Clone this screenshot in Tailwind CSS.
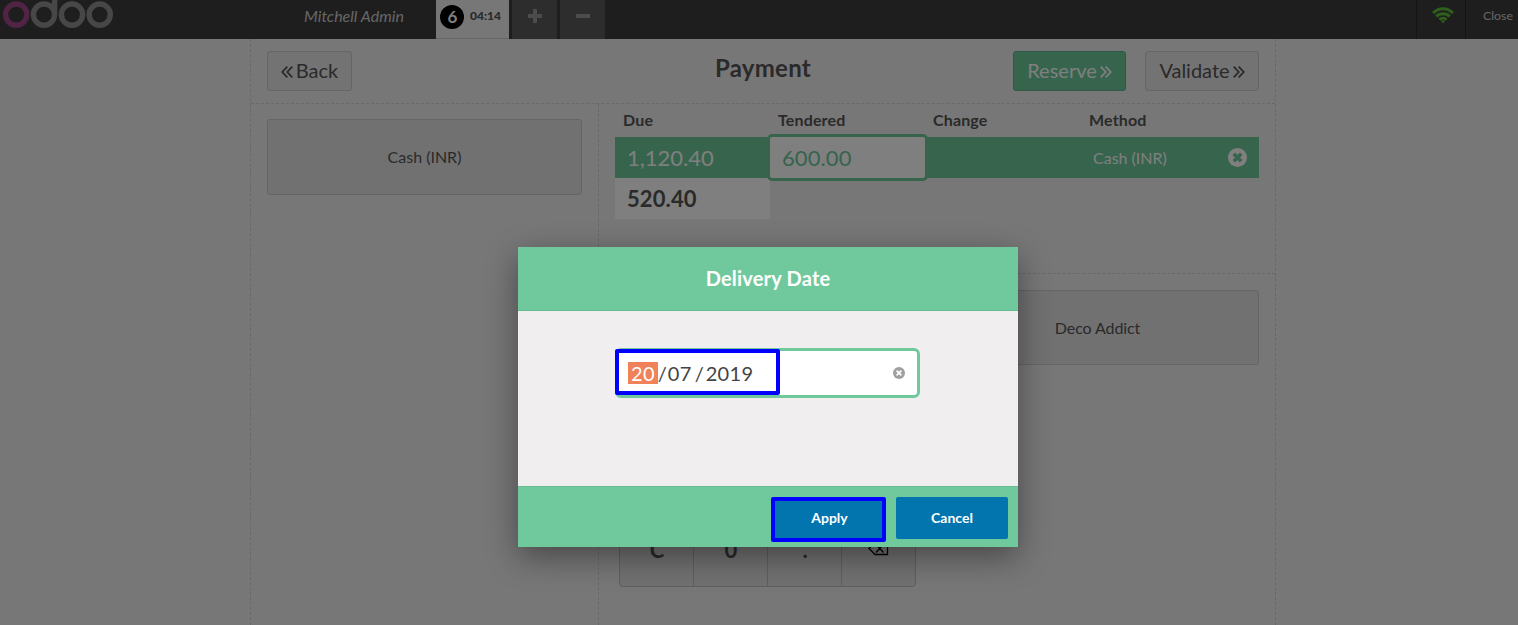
<!DOCTYPE html>
<html lang="en">
<head>
<meta charset="utf-8">
<title>Payment</title>
<script src="https://cdn.jsdelivr.net/npm/@tailwindcss/browser@4"></script>
</head>
<body class="relative h-[625px] w-[1518px] overflow-hidden bg-[#f0eeee] font-['Lato',sans-serif] text-[#555555]">

<!-- Top bar -->
<header class="flex h-[39px] bg-[#3c3c3c] text-[#cccccc]">
  <div class="w-[304px]">
    <svg class="block" width="116" height="30" viewBox="0 0 116 30" fill="none" stroke-width="5.4">
      <circle cx="16.2" cy="14.6" r="10.6" stroke="#a24689"/>
      <g stroke="#8f8f8f"><circle cx="44" cy="14.6" r="10.6"/><path d="M54.6 0V15"/><circle cx="72" cy="14.6" r="10.6"/><circle cx="99.7" cy="14.6" r="10.6"/></g>
    </svg>
  </div>
  <div class="w-[132px] pt-[3px] text-[16px] leading-[25px] italic">Mitchell Admin</div>
  <div class="mr-[3px] flex w-[73px] items-start border-b border-[#cccccc] bg-[#f0eeee] pt-[5px] pl-[4px] text-[#555555]">
    <span class="flex size-[24px] items-center justify-center rounded-full bg-black pl-[1px] text-[17px] font-bold text-white">6</span>
    <span class="ml-[6px] pt-px text-[12px] leading-[20px] font-black">04:14</span>
  </div>
  <div class="mr-[3px] flex w-[45px] justify-center bg-[#5b5b5b] pt-[9px] pl-px">
    <svg width="14" height="14" viewBox="0 0 14 14" stroke="#999" stroke-width="4"><path d="M0 7H14M7 0V14"/></svg>
  </div>
  <div class="flex w-[45px] justify-center bg-[#5b5b5b] pt-[9px] pl-px">
    <svg width="14" height="14" viewBox="0 0 14 14" stroke="#999" stroke-width="4"><path d="M0 7H14"/></svg>
  </div>
  <div class="ml-auto flex w-[50px] justify-center border-x border-[#292929] pt-[7px] pl-[4px]">
    <svg width="22" height="16" viewBox="0 0 22 16" fill="none" stroke="#5ec137" stroke-width="3"><path d="M1 6C6.5 .2 15.5 .2 21 6"/><path d="M4.3 9.4C8 5.8 14 5.8 17.7 9.4"/><path d="M7.5 12.7C9.5 10.8 12.5 10.8 14.5 12.7"/><path d="M11 16L8.9 13.9Q11 12.6 13.1 13.9Z" fill="#5ec137" stroke="none"/></svg>
  </div>
  <div class="w-[52px] pt-[6px] pl-[17px] text-[12.3px] leading-[20px]">Close</div>
</header>

<!-- Payment screen -->
<main class="ml-[250px] flex h-[586px] w-[1026px] flex-col border-x border-dashed border-[#d4d2d2]">
  <div class="flex h-[65px] shrink-0 items-start border-b border-dashed border-[#d4d2d2] px-[16px] pt-[12px]">
    <div class="flex h-[40px] w-[85px] items-center justify-center gap-[3px] rounded-[3px] border border-[#cacaca] bg-[#e6e6e6] text-[20px]">
      <svg class="mt-[2px]" width="12" height="12" viewBox="0 0 12 12" fill="none" stroke="currentColor" stroke-width="1.8"><path d="M6.3 .7L1.3 6L6.3 11.3M11.3 .7L6.3 6L11.3 11.3"/></svg>
      <span class="pb-[2px]">Back</span>
    </div>
    <h1 class="ml-[363px] w-[298px] text-[24px] leading-[34px] font-bold tracking-[0.25px]">Payment</h1>
    <div class="flex h-[40px] w-[113px] items-center justify-center gap-[3px] rounded-[3px] border border-[#64af8a] bg-[#6ec89b] text-[20px] text-white">
      <span class="pb-[2px]">Reserve</span>
      <svg class="mt-[2px]" width="12" height="12" viewBox="0 0 12 12" fill="none" stroke="currentColor" stroke-width="1.8"><path d="M.7 .7L5.7 6L.7 11.3M5.7 .7L10.7 6L5.7 11.3"/></svg>
    </div>
    <div class="ml-[19px] flex h-[40px] w-[114px] items-center justify-center gap-[3px] rounded-[3px] border border-[#cacaca] bg-[#e6e6e6] text-[20px]">
      <span class="pb-[2px]">Validate</span>
      <svg class="mt-[2px]" width="12" height="12" viewBox="0 0 12 12" fill="none" stroke="currentColor" stroke-width="1.8"><path d="M.7 .7L5.7 6L.7 11.3M5.7 .7L10.7 6L5.7 11.3"/></svg>
    </div>
  </div>

  <div class="flex flex-1">
    <div class="w-[348px] border-r border-dashed border-[#d4d2d2] px-[16px] pt-[15px]">
      <div class="flex h-[76px] items-center justify-center rounded-[3px] border border-[#cacaca] bg-[#e2e2e2] text-[16px]">Cash (INR)</div>
    </div>

    <div class="flex flex-1 flex-col">
      <div class="h-[170px] shrink-0 border-b border-dashed border-[#d4d2d2] px-[16px]">
        <div class="grid h-[33px] grid-cols-[155px_155px_156px_178px] items-center pb-[2px] text-[16px] font-bold tracking-[0.15px] *:pl-[8px]">
          <span>Due</span><span>Tendered</span><span>Change</span><span>Method</span>
        </div>
        <div class="grid h-[41px] grid-cols-[155px_155px_156px_178px] grid-rows-[41px] items-center bg-[#6ec89b] text-white">
          <span class="pb-px pl-[12px] text-[22px]">1,120.40</span>
          <span class="-ml-[3px] flex h-[47px] w-[161px] items-center rounded-[5px] border-3 border-[#6ec89b] bg-white pl-[12px] text-[22px] tracking-[0.1px] text-[#6ec89b]">600.00</span>
          <span></span>
          <span class="flex items-center justify-between pr-[12px] pl-[12px] text-[16px]">Cash (INR)
            <svg width="19" height="19" viewBox="0 0 19 19"><circle cx="9.5" cy="9.5" r="9.5" fill="#fff"/><path d="M5.8 5.8L13.2 13.2M13.2 5.8L5.8 13.2" stroke="#6ec89b" stroke-width="3.6"/></svg>
          </span>
        </div>
        <div class="flex h-[41px] w-[155px] items-center bg-white pl-[12px] text-[22px] font-bold tracking-[0.1px]">520.40</div>
      </div>

      <div class="flex flex-1 items-start pt-[16px] pr-[16px] pl-[20px]">
        <div class="grid h-[297px] w-[297px] grid-cols-[74px_74px_74px_73px] grid-rows-4 overflow-hidden rounded-[4px] border border-[#bfbfbf] bg-[#e2e2e2] text-[22px] font-bold">
          <div class="col-span-4 row-span-3"></div>
          <div class="flex items-center justify-center border-r border-[#bfbfbf] pl-px">C</div>
          <div class="flex items-center justify-center border-r border-[#bfbfbf] pl-px">0</div>
          <div class="flex items-center justify-center border-r border-[#bfbfbf] pl-px">.</div>
          <div class="flex items-center justify-center">
            <svg width="21" height="16" viewBox="0 0 21 16" fill="none" stroke="#000" stroke-width="1.3"><path d="M1 7.5L7 1H19.5V13.5H7ZM8 3.5L15.5 11.5M15.5 3.5L8 11.5"/></svg>
          </div>
        </div>
        <div class="ml-auto flex h-[75px] w-[323px] items-center justify-center rounded-[3px] border border-[#cacaca] bg-[#e2e2e2] text-[16px] tracking-[-0.1px]">Deco Addict</div>
      </div>
    </div>
  </div>
</main>

<!-- Delivery date dialog -->
<div class="absolute inset-0 bg-black/50">
  <section class="mt-[247px] ml-[518px] flex h-[300px] w-[500px] flex-col rounded-t-[2px] bg-[#f0eeee] shadow-[0_10px_32px_rgba(0,0,0,0.4)]">
    <h2 class="flex h-[64px] items-center justify-center rounded-t-[2px] border-b border-[#64bb8e] bg-[#70c99d] pb-[2px] text-[20px] font-bold tracking-[0.2px] text-white">Delivery Date</h2>
    <div class="flex-1 pt-[37px] pl-[97px]">
      <div class="relative flex h-[50px] w-[305px] items-center rounded-[6px] border-3 border-[#70c99d] bg-white pr-[12px] pl-[10px] text-[20px] text-[#444444]">
        <span class="-mt-px flex items-center">
          <span class="bg-[#f08259] px-[3px] leading-[22px] tracking-[0.3px] text-white">20</span>
          <span>/</span><span class="ml-[1px] tracking-[0.3px]">07</span><span class="ml-[3px]">/</span><span class="ml-[2px] tracking-[0.3px]">2019</span>
        </span>
        <svg class="-mt-px ml-auto" width="12" height="12" viewBox="0 0 12 12"><circle cx="6" cy="6" r="6" fill="#a0a0a0"/><path d="M3.6 3.6L8.4 8.4M8.4 3.6L3.6 8.4" stroke="#fff" stroke-width="1.7"/></svg>
        <span class="absolute -top-[2px] -left-[3px] h-[46px] w-[165px] rounded-[2px] border-4 border-[#0000ff]"></span>
      </div>
    </div>
    <div class="flex h-[61px] items-start justify-end gap-[10px] border-t border-[#64bb8e] bg-[#70c99d] pt-[10px] pr-[10px] text-[14px] font-bold text-white">
      <div class="flex h-[45px] w-[115px] justify-center rounded-[2px] border-4 border-[#0000ff] bg-[#0275ae] pt-[6px] pl-[2px] leading-[22px]">Apply</div>
      <div class="flex h-[42px] w-[112px] items-center justify-center rounded-[2px] bg-[#0275ae] pb-[2px]">Cancel</div>
    </div>
  </section>
</div>
</body>
</html>
